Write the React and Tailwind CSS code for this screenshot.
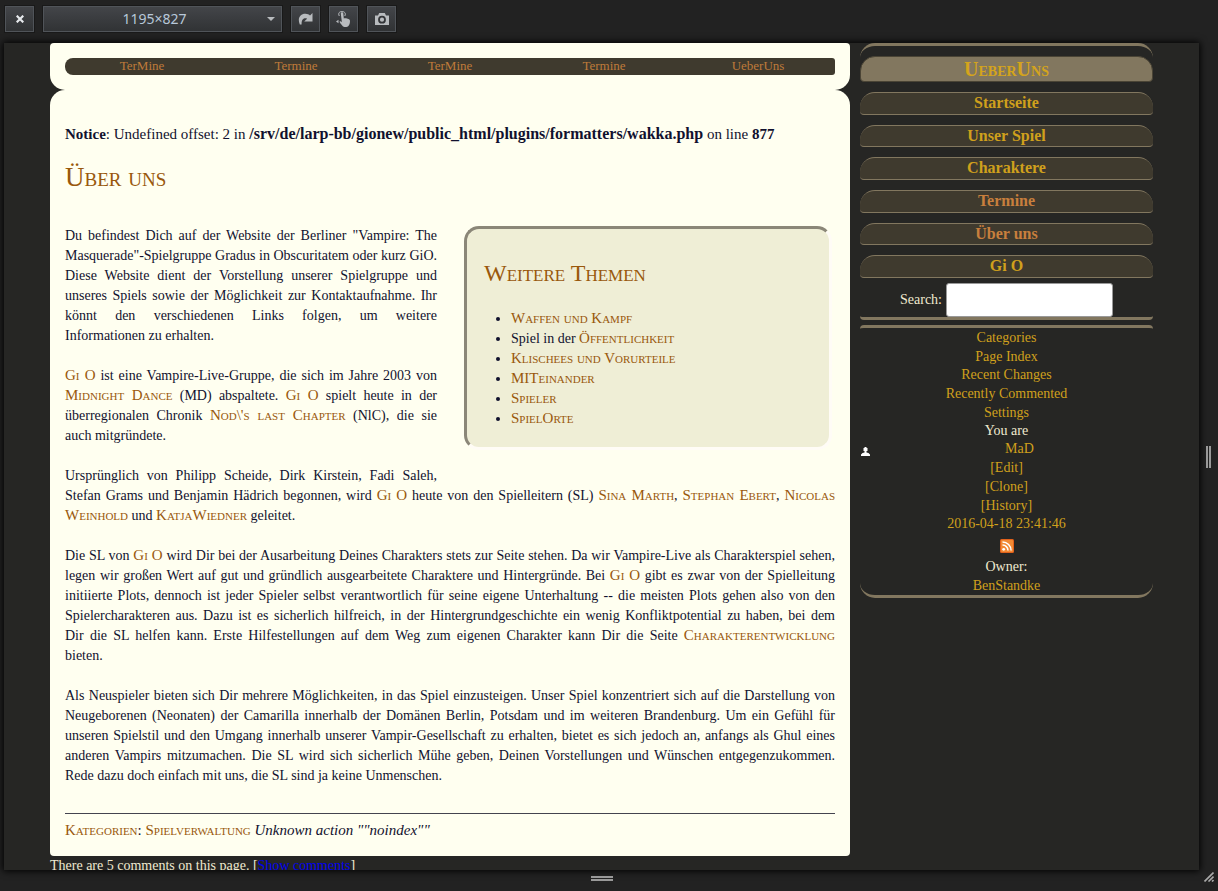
import { useState } from 'react'
import clsx from 'clsx'

const navLinks = ['TerMine', 'Termine', 'TerMine', 'Termine', 'UeberUns']

const menu = [
  { label: 'Startseite' },
  { label: 'Unser Spiel' },
  { label: 'Charaktere' },
  { label: 'Termine', missing: true },
  { label: 'Über uns', missing: true },
  { label: 'Gi O' },
]

function Wiki({ children }) {
  return (
    <a href="#" className="text-[15px] leading-4 text-[#99580c] [font-variant:small-caps]">
      {children}
    </a>
  )
}

// Justified paragraph, one entry per line, the last one stays left aligned
function Para({ lines }) {
  return (
    <p className="mb-5">
      {lines.map((line, i) => (
        <span
          key={i}
          className={clsx(
            'block whitespace-nowrap text-justify',
            i < lines.length - 1 && '[text-align-last:justify]'
          )}
        >
          {line}
        </span>
      ))}
    </p>
  )
}

function ToolButton({ label, children }) {
  return (
    <button
      aria-label={label}
      className="flex h-7 w-[31px] items-center justify-center border border-[#191919] bg-linear-to-b from-[#44464a] to-[#303234] text-[#b8bbbe] inset-ring inset-ring-[#505459]"
    >
      {children}
    </button>
  )
}

function Toolbar() {
  const [size, setSize] = useState('1195×827')
  return (
    <div className="flex h-[43px] shrink-0 items-start gap-[7px] pl-1 pt-[5px]">
      <ToolButton label="Close">
        <svg width="8" height="8" viewBox="0 0 8 8" stroke="#e6e9ec" strokeWidth="2.2">
          <path d="M0.7 0.7 7.3 7.3M7.3 0.7 0.7 7.3" />
        </svg>
      </ToolButton>
      <div className="relative">
        <select
          aria-label="Size"
          value={size}
          onChange={e => setSize(e.target.value)}
          className="h-7 w-[241px] appearance-none border border-[#191919] bg-linear-to-b from-[#44464a] to-[#303234] pr-4 text-center font-['Noto_Sans',sans-serif] text-sm text-[#b8c8d9] inset-ring inset-ring-[#505459] [text-align-last:center]"
        >
          <option>1195×827</option>
        </select>
        <svg className="pointer-events-none absolute right-2 top-3" width="8" height="4" viewBox="0 0 8 4" fill="#b8bbbe">
          <path d="M0 0h8L4 4z" />
        </svg>
      </div>
      <ToolButton label="Rotate">
        <svg width="15" height="12" viewBox="0 0 15 12" fill="currentColor">
          <path d="M14.5 0v8.4H6.2l2.9-2.7C6.300 4.600 3.400 6 3.600 11.500H1.800C-1 5 2.500 0.500 7.500 0.700 9.500 0.800 11 1.500 12 2.500z" />
        </svg>
      </ToolButton>
      <ToolButton label="Touch">
        <svg width="15" height="16" viewBox="0 0 15 16" fill="currentColor">
          <path d="M4.800 2.400c0-1.700 2.400-1.700 2.500 0l.5 5c1.800-.2 5.500.4 6 1.500.5 1.500 0 4-.9 5.400-.6 1-1.300 1.700-2.500 1.700H8.500c-1.200 0-2-1-4-3.500l-1-1.800c.6-.8 1.500-.4 2.400.6z" />
          <path d="M3.300 5C1.700 1.900 3.800.5 6 .5S10.300 2 8.800 5" fill="none" stroke="currentColor" />
          <path d="M0 10.500 2.500 8.800v3.400z" />
        </svg>
      </ToolButton>
      <ToolButton label="Screenshot">
        <svg width="14" height="12" viewBox="0 0 14 12">
          <path d="M0 2.500h3L4.200 0h5.600L11 2.500h3V12H0z" fill="currentColor" />
          <circle cx="7" cy="6.700" r="3" fill="none" stroke="#333538" strokeWidth="1.800" />
        </svg>
      </ToolButton>
    </div>
  )
}

function Topics() {
  return (
    <aside className="float-right mb-5 ml-[27px] mr-[3px] h-[224px] w-[368px] rounded-[15px] border-[3px] border-b-[#fffcf6] border-l-[#8b8778] border-r-[#fffcf6] border-t-[#8b8778] bg-[#efeed6] px-[17px] pt-[30px]">
      <h2 className="mb-[22px] text-2xl leading-7 text-[#99580c] [font-variant:small-caps]">Weitere Themen</h2>
      <ul className="list-disc pl-[27px]">
        <li><Wiki>Waffen und Kampf</Wiki></li>
        <li>Spiel in der <Wiki>Öffentlichkeit</Wiki></li>
        <li><Wiki>Klischees und Vorurteile</Wiki></li>
        <li><Wiki>MITeinander</Wiki></li>
        <li><Wiki>Spieler</Wiki></li>
        <li><Wiki>SpielOrte</Wiki></li>
      </ul>
    </aside>
  )
}

function Article() {
  return (
    <article className="rounded-b rounded-t-[15px] bg-[#fffff0] px-[15px] pb-4 pt-[34px] text-[#11112e]">
      <p className="text-[15px]">
        <b>Notice</b>: Undefined offset: 2 in{' '}
        <b className="text-base leading-4">/srv/de/larp-bb/gionew/public_html/plugins/formatters/wakka.php</b> on
        line <b>877</b>
      </p>
      <h1 className="mb-8 mt-4 text-[27px] leading-[34px] text-[#99580c] [font-variant:small-caps]">Über uns</h1>
      <Topics />
      <Para
        lines={[
          'Du befindest Dich auf der Website der Berliner "Vampire: The',
          'Masquerade"-Spielgruppe Gradus in Obscuritatem oder kurz GiO.',
          'Diese Website dient der Vorstellung unserer Spielgruppe und',
          'unseres Spiels sowie der Möglichkeit zur Kontaktaufnahme. Ihr',
          'könnt den verschiedenen Links folgen, um weitere',
          'Informationen zu erhalten.',
        ]}
      />
      <Para
        lines={[
          <><Wiki>Gi O</Wiki> ist eine Vampire-Live-Gruppe, die sich im Jahre 2003 von</>,
          <><Wiki>Midnight Dance</Wiki> (MD) abspaltete. <Wiki>Gi O</Wiki> spielt heute in der</>,
          <>überregionalen Chronik <Wiki>Nod\'s last Chapter</Wiki> (NlC), die sie</>,
          'auch mitgründete.',
        ]}
      />
      <Para
        lines={[
          'Ursprünglich von Philipp Scheide, Dirk Kirstein, Fadi Saleh,',
          <>Stefan Grams und Benjamin Hädrich begonnen, wird <Wiki>Gi O</Wiki> heute von den Spielleitern (SL) <Wiki>Sina Marth</Wiki>, <Wiki>Stephan Ebert</Wiki>, <Wiki>Nicolas</Wiki></>,
          <><Wiki>Weinhold</Wiki> und <Wiki>KatjaWiedner</Wiki> geleitet.</>,
        ]}
      />
      <Para
        lines={[
          <>Die SL von <Wiki>Gi O</Wiki> wird Dir bei der Ausarbeitung Deines Charakters stets zur Seite stehen. Da wir Vampire-Live als Charakterspiel sehen,</>,
          <>legen wir großen Wert auf gut und gründlich ausgearbeitete Charaktere und Hintergründe. Bei <Wiki>Gi O</Wiki> gibt es zwar von der Spielleitung</>,
          'initiierte Plots, dennoch ist jeder Spieler selbst verantwortlich für seine eigene Unterhaltung -- die meisten Plots gehen also von den',
          'Spielercharakteren aus. Dazu ist es sicherlich hilfreich, in der Hintergrundgeschichte ein wenig Konfliktpotential zu haben, bei dem',
          <>Dir die SL helfen kann. Erste Hilfestellungen auf dem Weg zum eigenen Charakter kann Dir die Seite <Wiki>Charakterentwicklung</Wiki></>,
          'bieten.',
        ]}
      />
      <Para
        lines={[
          'Als Neuspieler bieten sich Dir mehrere Möglichkeiten, in das Spiel einzusteigen. Unser Spiel konzentriert sich auf die Darstellung von',
          'Neugeborenen (Neonaten) der Camarilla innerhalb der Domänen Berlin, Potsdam und im weiteren Brandenburg. Um ein Gefühl für',
          'unseren Spielstil und den Umgang innerhalb unserer Vampir-Gesellschaft zu erhalten, bietet es sich jedoch an, anfangs als Ghul eines',
          'anderen Vampirs mitzumachen. Die SL wird sich sicherlich Mühe geben, Deinen Vorstellungen und Wünschen entgegenzukommen.',
          'Rede dazu doch einfach mit uns, die SL sind ja keine Unmenschen.',
        ]}
      />
      <hr className="mb-[6px] mt-[27px] border-[#44444f]" />
      <p className="text-[15px]">
        <Wiki>Kategorien</Wiki>: <Wiki>Spielverwaltung</Wiki> <em>Unknown action ""noindex""</em>
      </p>
    </article>
  )
}

function Sidebar() {
  const [query, setQuery] = useState('')
  return (
    <div className="w-[293px] shrink-0 text-center text-[#f0ead0]">
      <div className="rounded-b rounded-t-[15px] border-y-[3px] border-[#82775f]">
        <h2 className="mt-[10px] h-[26px] rounded-b rounded-t-[15px] border border-[#4a4435] bg-[#82775f] text-xl font-bold leading-6 text-[#d4a41c] [font-variant:small-caps]">
          UeberUns
        </h2>
        <nav className="mt-[10px] flex h-[186px] flex-col gap-[10px]">
          {menu.map(item => (
            <a
              key={item.label}
              href="#"
              className={clsx(
                'flex-1 rounded-b rounded-t-[15px] border-y border-[#82775f] bg-[#3f3a2e] text-base font-bold leading-5',
                item.missing ? 'text-[#c87f3d]' : 'text-[#d0a01c]'
              )}
            >
              {item.label}
            </a>
          ))}
        </nav>
        <div className="mt-[5px] flex items-center justify-center gap-1">
          <label htmlFor="search">Search:</label>
          <input
            id="search"
            type="text"
            value={query}
            onChange={e => setQuery(e.target.value)}
            className="h-[34px] w-[167px] rounded-[3px] border border-[#999] bg-white px-2 text-black"
          />
        </div>
      </div>

      <div className="mt-[5px] rounded-b-[15px] rounded-t border-y-[3px] border-[#82775f] text-[#d0a01c]">
        <div className="grid h-[205px] auto-rows-fr">
          <a href="#">Categories</a>
          <a href="#">Page Index</a>
          <a href="#">Recent Changes</a>
          <a href="#">Recently Commented</a>
          <a href="#">Settings</a>
          <span className="text-[#f0ead0]">You are</span>
          <div className="flex items-center">
            <svg className="ml-px mt-1" width="9" height="9" viewBox="0 0 9 9" fill="#fff">
              <path d="M2.500 1h1V0h2v1h1v3h-1v1.500l2 .5L9 7.500V9H0V7.500L1.500 6l2-.5V4h-1z" />
            </svg>
            <a href="#" className="flex-1 pl-4">MaD</a>
          </div>
          <a href="#">[Edit]</a>
          <a href="#">[Clone]</a>
          <a href="#">[History]</a>
          <a href="#">2016-04-18 23:41:46</a>
        </div>
        <a href="#" aria-label="Feed" className="flex h-6 items-end justify-center pb-1">
          <svg width="14" height="14" viewBox="0 0 14 14">
            <rect width="14" height="14" rx="1.500" fill="#e2611b" />
            <rect x="1" y="1" width="12" height="12" rx="1" fill="#f28a34" />
            <circle cx="3.700" cy="10.300" r="1.400" fill="#fff" />
            <path d="M2.500 6a5.500 5.500 0 0 1 5.500 5.500M2.500 2.900a8.600 8.600 0 0 1 8.600 8.600" fill="none" stroke="#fff" strokeWidth="1.500" />
          </svg>
        </a>
        <p className="h-[19px] text-[#f0ead0]">Owner:</p>
        <a href="#" className="block h-[19px]">BenStandke</a>
      </div>
    </div>
  )
}

export default function App() {
  return (
    <div className="flex h-screen flex-col overflow-hidden bg-[#222]">
      <Toolbar />
      <div className="flex min-h-0 flex-1">
        <div className="ml-1 flex flex-1 items-start gap-[10px] overflow-hidden bg-[#262624] px-[46px] font-['Liberation_Serif',serif] text-sm leading-5 shadow-[0_0_7px_1px_#000]">
          <main className="min-w-0 flex-1">
            <header className="rounded-b-[15px] rounded-t bg-[#fffff0] p-[15px]">
              <nav className="grid h-[17px] grid-cols-5 rounded-l-[8px] rounded-r-[3px] bg-[#3f3a2e] text-center text-[13px] leading-4 text-[#bf7a3a]">
                {navLinks.map((label, i) => (
                  <a key={i} href="#">{label}</a>
                ))}
              </nav>
            </header>
            <Article />
            <p className="text-[#f0ead0]">
              There are 5 comments on this page. [<a href="#" className="text-[#0000ee]">Show comments</a>]
            </p>
          </main>
          <Sidebar />
        </div>
        <div className="flex w-[19px] items-center justify-center">
          <span className="h-[22px] w-[5px] border-x-2 border-[#999]" />
        </div>
      </div>
      <div className="flex h-[21px] shrink-0 items-center pl-1">
        <div className="flex flex-1 justify-center">
          <span className="mb-1 h-[5px] w-[22px] border-y-2 border-[#999]" />
        </div>
        <div className="flex w-[19px] justify-center">
          <svg className="mb-2" width="10" height="10" viewBox="0 0 10 10" stroke="#aaa" strokeWidth="1.600">
            <path d="M0.500 9.500 9.500 0.500M4.500 9.500 9.500 4.500M8 9.500 9.500 8" />
          </svg>
        </div>
      </div>
    </div>
  )
}
